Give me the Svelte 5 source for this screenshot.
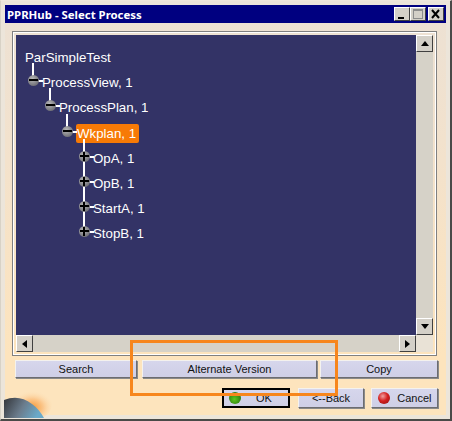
<script>
	const nodes = [
		{ label: 'ParSimpleTest', level: 0, root: true },
		{ label: 'ProcessView, 1', level: 1, sign: 'minus' },
		{ label: 'ProcessPlan, 1', level: 2, sign: 'minus' },
		{ label: 'Wkplan, 1', level: 3, sign: 'minus', selected: true },
		{ label: 'OpA, 1', level: 4, sign: 'plus', more: true },
		{ label: 'OpB, 1', level: 4, sign: 'plus', more: true },
		{ label: 'StartA, 1', level: 4, sign: 'plus', more: true },
		{ label: 'StopB, 1', level: 4, sign: 'plus' }
	];
</script>

<div class="window">
	<div class="titlebar">
		<span class="title">PPRHub - Select Process</span>
		<div class="caption-buttons">
			<button class="cap">
				<svg width="16" height="14" viewBox="0 0 16 14"><rect x="4" y="10" width="6" height="2" fill="#000" /></svg>
			</button>
			<button class="cap">
				<svg width="16" height="14" viewBox="0 0 16 14"><rect x="3.5" y="2.5" width="9" height="9" fill="none" stroke="#8c8c8c" /><rect x="3" y="2" width="10" height="2" fill="#8c8c8c" /></svg>
			</button>
			<button class="cap close">
				<svg width="16" height="14" viewBox="0 0 16 14"><path d="M4 3l7 8M11 3l-7 8" stroke="#000" stroke-width="2" fill="none" /></svg>
			</button>
		</div>
	</div>

	<div class="body">
		<div class="frame">
			<div class="frame-grid">
				<div class="tree">
					{#each nodes as node}
						<div class="row" class:root={node.root} style="margin-left: {node.root ? 0 : (node.level - 1) * 17}px">
							{#if !node.root}
								<span class="stem" class:long={node.more}></span>
								<span class="stem-h"></span>
								<span class="knob">
									<span class="bar"></span>
									{#if node.sign === 'plus'}<span class="bar vert"></span>{/if}
								</span>
							{/if}
							<span class="label" class:selected={node.selected}>{node.label}</span>
						</div>
					{/each}
				</div>
				<div class="vscroll">
					<div class="arrow"><svg width="10" height="6" viewBox="0 0 10 6"><path d="M5 0l4 5H1z" fill="#000" /></svg></div>
					<div class="track"></div>
					<div class="arrow"><svg width="10" height="6" viewBox="0 0 10 6"><path d="M1 0h8L5 5z" fill="#000" /></svg></div>
				</div>
				<div class="hscroll">
					<div class="arrow h"><svg width="6" height="10" viewBox="0 0 6 10"><path d="M5 1v8L0 5z" fill="#000" /></svg></div>
					<div class="track"></div>
					<div class="arrow h"><svg width="6" height="10" viewBox="0 0 6 10"><path d="M0 1v8l5-4z" fill="#000" /></svg></div>
				</div>
				<div class="corner"></div>
			</div>
		</div>

		<div class="actions">
			<button class="btn search">Search</button>
			<button class="btn alternate">Alternate Version</button>
			<button class="btn copy">Copy</button>
		</div>

		<div class="footer">
			<button class="btn dlg ok"><span class="dot green"></span><span class="dlg-text">OK</span></button>
			<button class="btn dlg back">&lt;--Back</button>
			<button class="btn dlg cancel"><span class="dot red"></span><span class="dlg-text">Cancel</span></button>
		</div>
	</div>

	<svg class="globe" width="50" height="34" viewBox="0 0 50 34">
		<defs>
			<radialGradient id="glow" cx="0.55" cy="0.6" r="0.5">
				<stop offset="0" stop-color="#f59a3a" />
				<stop offset="0.5" stop-color="#fbc78c" />
				<stop offset="1" stop-color="#fde4bd" stop-opacity="0" />
			</radialGradient>
			<linearGradient id="earth" x1="0" y1="0" x2="1" y2="0.3">
				<stop offset="0" stop-color="#33353a" />
				<stop offset="0.55" stop-color="#6b7c8c" />
				<stop offset="1" stop-color="#6aa9c8" />
			</linearGradient>
		</defs>
		<ellipse cx="26" cy="20" rx="22" ry="17" fill="url(#glow)" />
		<path d="M0 16Q15 10 28 20Q35 25 40 34H0z" fill="url(#earth)" />
	</svg>

	<div class="callout"></div>
</div>

<style>
	:global(body) {
		margin: 0;
	}

	.window {
		position: relative;
		width: 452px;
		height: 421px;
		box-sizing: border-box;
		padding: 4px;
		display: flex;
		flex-direction: column;
		overflow: hidden;
		background: #ece5da;
		border-top: 1px solid #efe8dc;
		border-left: 1px solid #d8d2c6;
		border-right: 2px solid #4a4a48;
		border-bottom: 2px solid #4a4a48;
		font-family: "Liberation Sans", Arial, sans-serif;
	}

	.titlebar {
		height: 18px;
		flex: none;
		background: #000080;
		display: flex;
		align-items: center;
		justify-content: space-between;
		padding: 0 2px;
	}

	.title {
		color: #fff;
		font-weight: bold;
		font-size: 11.4px;
		font-family: "Noto Sans", sans-serif;
	}

	.caption-buttons {
		display: flex;
	}

	.cap {
		width: 16px;
		height: 14px;
		padding: 0;
		border: 1px solid;
		border-color: #fff #404040 #404040 #fff;
		background: #d4d0c8;
		display: flex;
		align-items: center;
		justify-content: center;
		overflow: hidden;
	}

	.cap svg {
		flex: none;
	}

	.cap.close {
		margin-left: 2px;
	}

	.body {
		flex: 1;
		min-height: 0;
		background: linear-gradient(#ede1d3 0%, #f3e2cc 35%, #fde4bd 85%);
		padding: 8px 8px 0 7px;
		display: flex;
		flex-direction: column;
	}

	.frame {
		width: 425px;
		height: 325px;
		box-sizing: border-box;
		border: 1px solid #808080;
		outline: 1px solid #fff;
		outline-offset: -2px;
		padding: 3px;
		flex: none;
	}

	.frame-grid {
		height: 100%;
		display: grid;
		grid-template-columns: 1fr 17px;
		grid-template-rows: 1fr 17px;
	}

	.tree {
		background: #333366;
		padding: 10px 0 0 9px;
		overflow: hidden;
		color: #fff;
		font-size: 13.3px;
	}

	.row {
		position: relative;
		height: 25.2px;
		display: flex;
		align-items: center;
		white-space: nowrap;
	}

	.row:not(.root) {
		padding-left: 17px;
	}

	.label {
		padding: 0 2px 0 0;
		line-height: 19px;
	}

	.label.selected {
		background: #f77a06;
		border-radius: 2px;
		padding: 0 3px 0 1px;
		margin-left: 0;
	}

	.knob {
		position: absolute;
		left: 3px;
		top: 5px;
		width: 11px;
		height: 11px;
		border-radius: 50%;
		background: radial-gradient(circle at 40% 35%, #b9b9b9, #55555f);
	}

	.bar {
		position: absolute;
		left: 1px;
		top: 4px;
		width: 9px;
		height: 2px;
		background: #000;
	}

	.bar.vert {
		left: 4px;
		top: 1px;
		width: 2px;
		height: 9px;
	}

	.stem {
		position: absolute;
		left: 7px;
		top: -7px;
		width: 2px;
		height: 13px;
		background: #fff;
	}

	.stem.long {
		height: 33px;
	}

	.stem-h {
		position: absolute;
		left: 12px;
		top: 10px;
		width: 6px;
		height: 2px;
		background: #fff;
	}

	.vscroll {
		display: flex;
		flex-direction: column;
		background: #d4d0c8;
	}

	.hscroll {
		display: flex;
		background: #d4d0c8;
	}

	.track {
		flex: 1;
		background: #d6d2c8;
	}

	.arrow {
		width: 17px;
		height: 17px;
		box-sizing: border-box;
		border: 1px solid;
		border-color: #fff #404040 #404040 #fff;
		background: #d4d0c8;
		display: flex;
		align-items: center;
		justify-content: center;
		flex: none;
	}

	.corner {
		background: #e9e2d6;
	}

	.actions {
		display: flex;
		margin-top: 4px;
		padding-left: 3px;
		flex: none;
	}

	.btn {
		height: 18px;
		padding: 0;
		box-sizing: border-box;
		font-family: "Liberation Sans", Arial, sans-serif;
		font-size: 11px;
		color: #111;
		background: linear-gradient(#d6d6ec, #cfcfe6);
		border: 1px solid;
		border-color: #f4f2ee #6c6c70 #6c6c70 #f4f2ee;
		box-shadow: 1px 1px 0 #8a8a8a;
	}

	.search {
		width: 122px;
	}

	.alternate {
		width: 175px;
		margin-left: 5px;
	}

	.copy {
		width: 118px;
		margin-left: 3px;
	}

	.footer {
		display: flex;
		margin-top: 10px;
		padding-left: 210px;
		flex: none;
		position: relative;
		z-index: 1;
	}

	.dlg {
		height: 20px;
		width: 67px;
		display: flex;
		align-items: center;
		position: relative;
		justify-content: center;
	}

	.ok {
		width: 68px;
		box-shadow: none;
		border: 2px solid #000;
		justify-content: flex-start;
		padding-left: 5px;
	}

	.back {
		margin-left: 8px;
	}

	.cancel {
		margin-left: 7px;
		justify-content: flex-start;
		padding-left: 6px;
	}

	.dot {
		width: 12px;
		height: 12px;
		border-radius: 50%;
		flex: none;
	}

	.dot.green {
		background: radial-gradient(circle at 45% 60%, #5cc81e, #2e7d12 70%);
	}

	.dot.red {
		background: radial-gradient(circle at 40% 35%, #f0a0a0, #d42020 45%, #8c1010);
	}

	.ok .dlg-text {
		margin-left: 15px;
	}

	.cancel .dlg-text {
		margin-left: 7px;
	}

	.globe {
		position: absolute;
		left: 3px;
		bottom: 1px;
	}

	.callout {
		position: absolute;
		left: 129px;
		top: 339px;
		width: 208px;
		height: 56px;
		box-sizing: border-box;
		border: 3px solid #f7861c;
		pointer-events: none;
		z-index: 2;
	}
</style>
